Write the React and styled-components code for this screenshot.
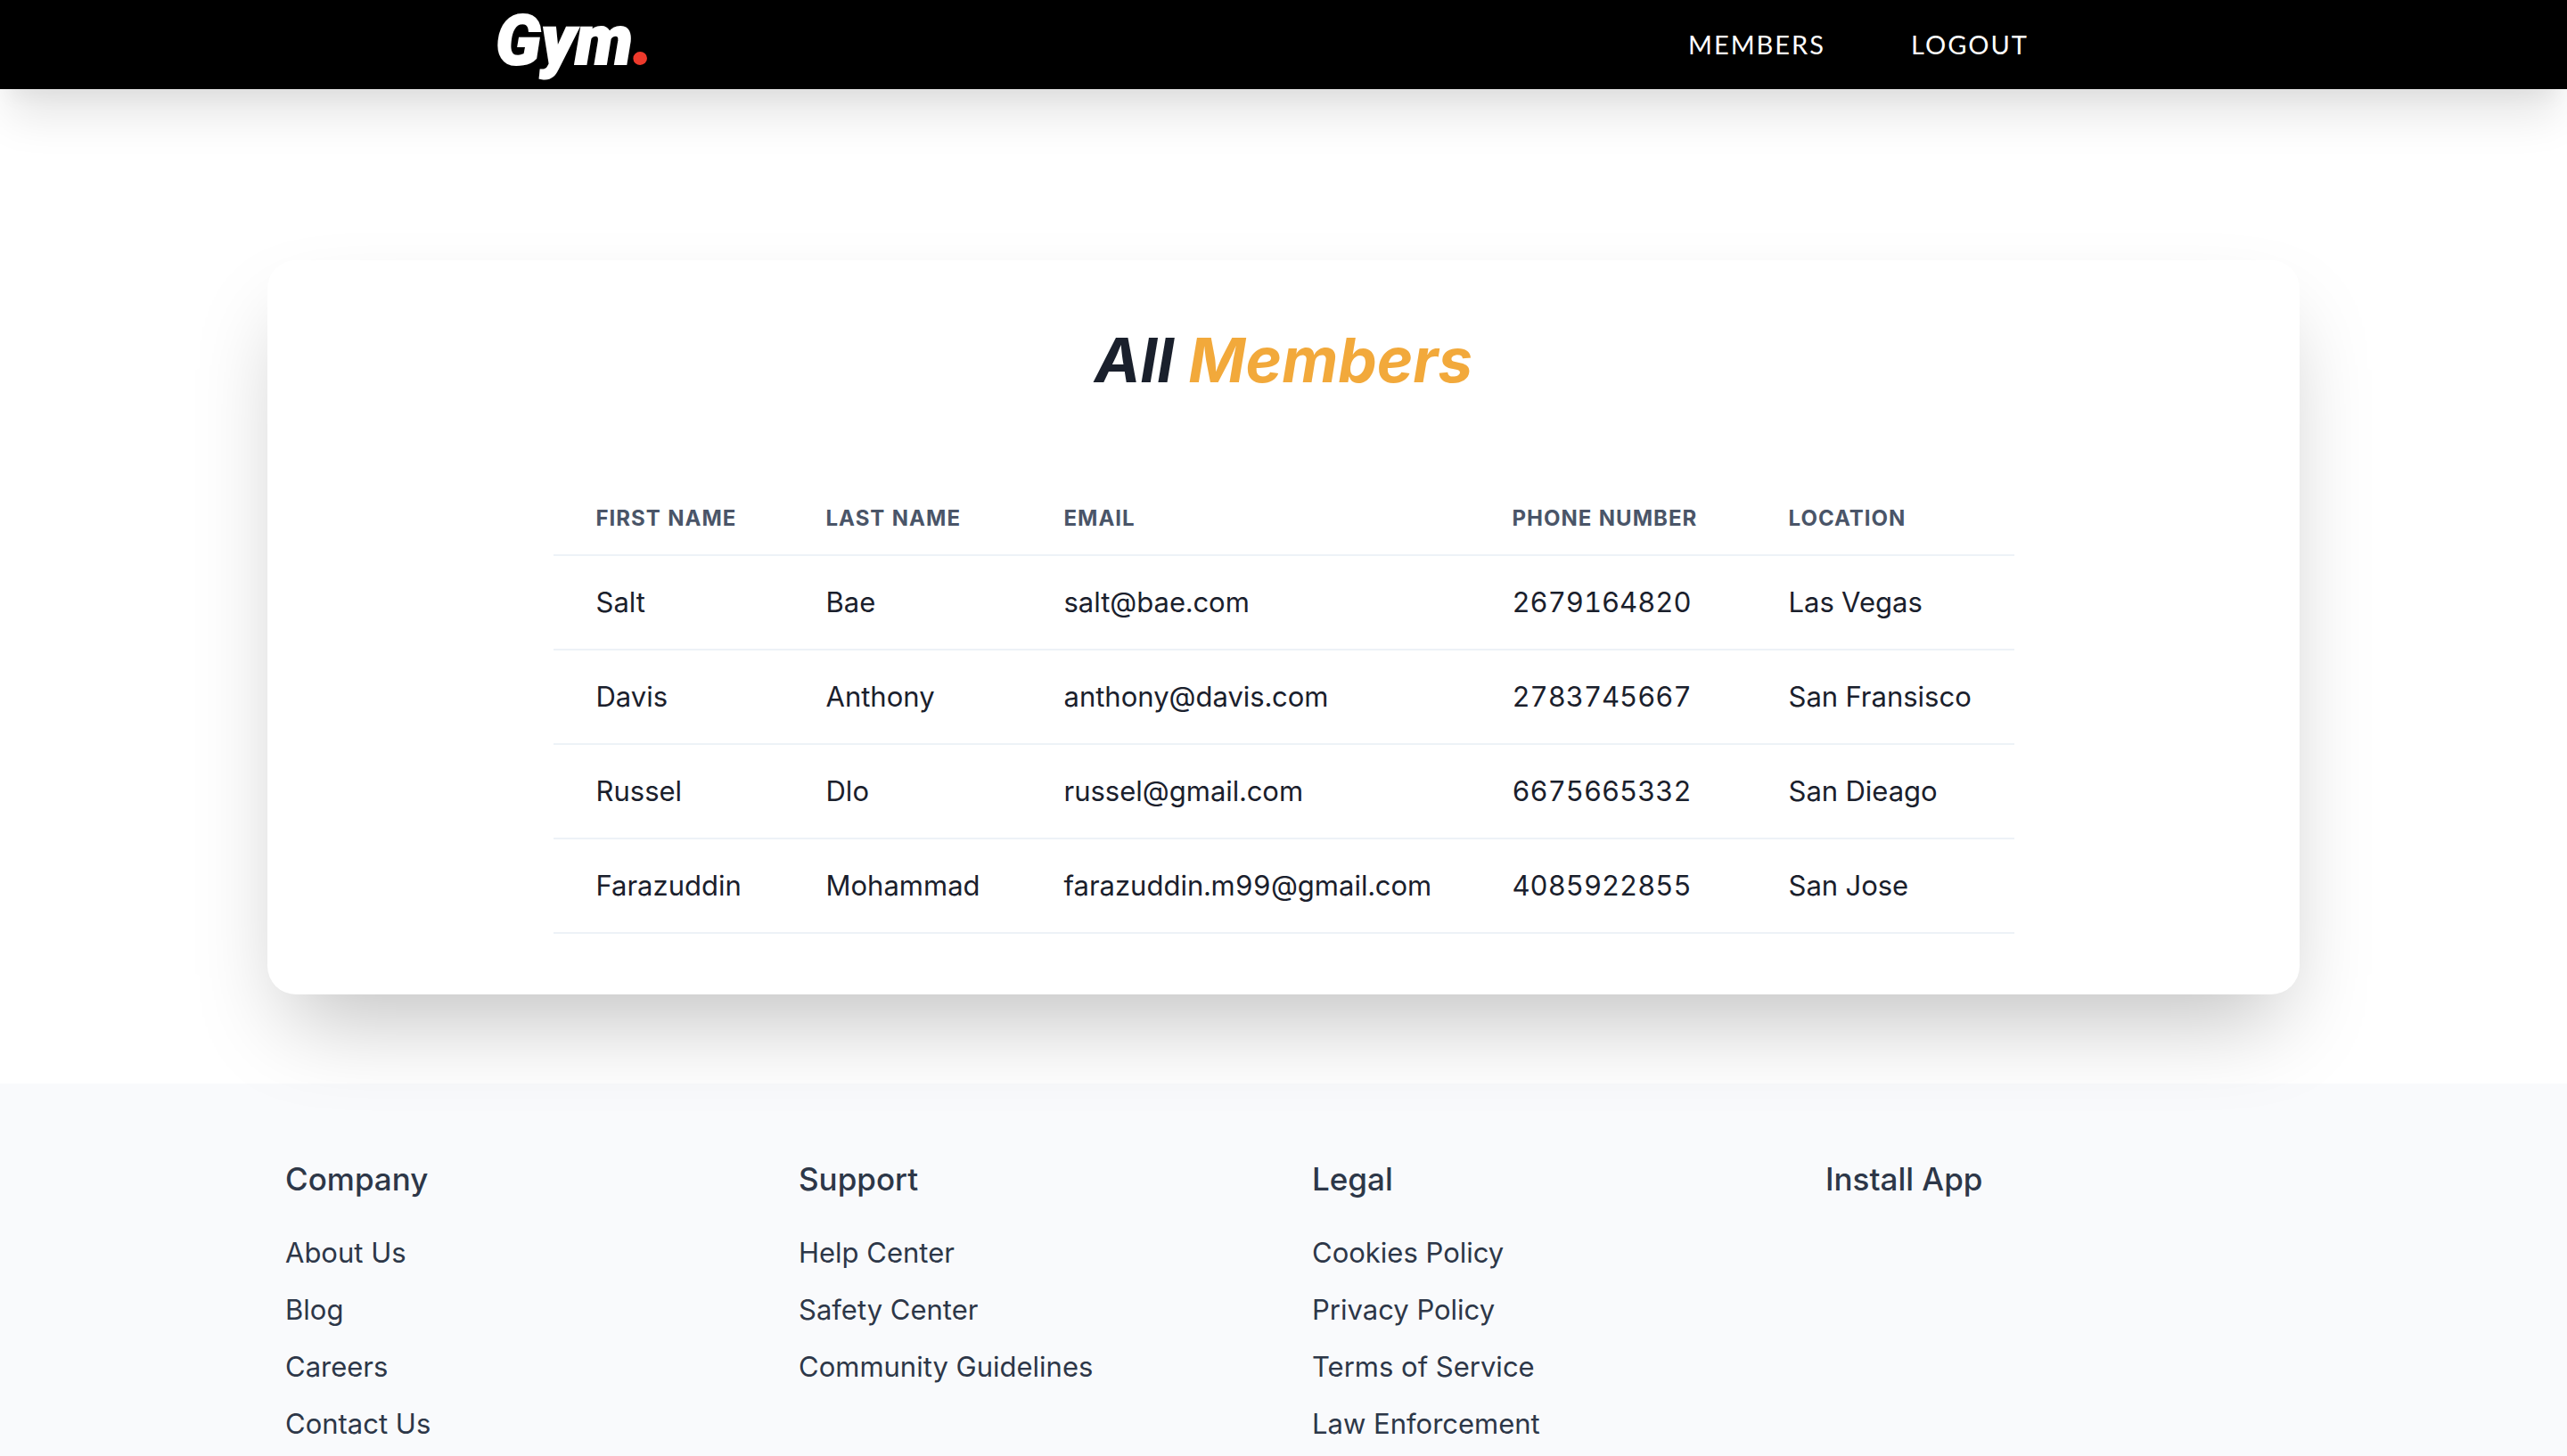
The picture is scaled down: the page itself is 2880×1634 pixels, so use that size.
import React from "react";
import styled, { createGlobalStyle } from "styled-components";

const GlobalStyle = createGlobalStyle`
  *, *::before, *::after { box-sizing: border-box; }
  body {
    margin: 0;
    background: #ffffff;
    color: #1a202c;
    font-family: Inter, "Liberation Sans", sans-serif;
    font-size: 31px;
    line-height: 48px;
  }
  a { color: inherit; text-decoration: none; }
`;

const NavBar = styled.header`
  display: flex;
  justify-content: space-around;
  align-items: center;
  height: 100px;
  background: #000000;
  box-shadow: 0 40px 50px -10px rgba(0, 0, 0, 0.1), 0 20px 20px -10px rgba(0, 0, 0, 0.04);
`;

const Logo = styled.a`
  width: 178px;
  padding-bottom: 8px;
  color: #ffffff;
  font: italic 900 77px/80px Roboto, sans-serif;
  -webkit-text-stroke: 2px currentColor;
  white-space: nowrap;
`;

const LogoDot = styled.span`
  color: #ee3a2c;
`;

const NavLinks = styled.nav`
  display: flex;
`;

const NavLink = styled.a`
  padding: 0 48px;
  color: #ffffff;
  font-family: Lato, sans-serif;
  font-size: 29px;
  letter-spacing: 2px;
  text-transform: uppercase;
`;

const Main = styled.main`
  padding: 192px 300px 100px;
`;

const Card = styled.section`
  position: relative;
  display: flex;
  flex-direction: column;
  align-items: center;
  padding: 68px 0;
  border-radius: 32px;
  background: #ffffff;
  box-shadow: 0 50px 100px -24px rgba(0, 0, 0, 0.25);
`;

const Title = styled.h1`
  margin: 0 0 94px;
  font-size: 69px;
  font-style: italic;
  font-weight: 700;
  line-height: 88px;
`;

const Accent = styled.span`
  color: #f2a93b;
`;

const Table = styled.table`
  table-layout: fixed;
  width: 1639px;
  border-collapse: collapse;
  text-align: left;
  font-variant-numeric: tabular-nums;
`;

const Col = styled.col`
  width: ${(p) => p.$width}px;
`;

const Th = styled.th`
  padding: 24px 48px;
  border-bottom: 2px solid #edf2f7;
  color: #4a5568;
  font-size: 24px;
  font-weight: 700;
  line-height: 32px;
  letter-spacing: 1px;
  text-transform: uppercase;
  white-space: nowrap;
`;

const Td = styled.td`
  padding: 32px 48px;
  border-bottom: 2px solid #edf2f7;
  line-height: 40px;
  white-space: nowrap;
`;

const Footer = styled.footer`
  background: #f9fafc;
  color: #2d3748;
`;

const FooterGrid = styled.div`
  display: grid;
  grid-template-columns: repeat(4, 1fr);
  gap: 64px;
  padding: 80px 320px;
`;

const FooterColumn = styled.div`
  display: flex;
  flex-direction: column;
  align-items: flex-start;
  gap: 16px;
`;

const FooterHeading = styled.h2`
  margin: 0 0 16px;
  font-size: 35px;
  font-weight: 500;
  line-height: 54px;
`;

const FooterLink = styled.a``;

const columns = [
  { label: "First Name", width: 258 },
  { label: "Last Name", width: 267 },
  { label: "Email", width: 503 },
  { label: "Phone Number", width: 310 },
  { label: "Location", width: 301 },
];

const members = [
  ["Salt", "Bae", "salt@bae.com", "2679164820", "Las Vegas"],
  ["Davis", "Anthony", "anthony@davis.com", "2783745667", "San Fransisco"],
  ["Russel", "Dlo", "russel@gmail.com", "6675665332", "San Dieago"],
  ["Farazuddin", "Mohammad", "farazuddin.m99@gmail.com", "4085922855", "San Jose"],
];

const footerColumns = [
  { title: "Company", links: ["About Us", "Blog", "Careers", "Contact Us"] },
  { title: "Support", links: ["Help Center", "Safety Center", "Community Guidelines"] },
  {
    title: "Legal",
    links: ["Cookies Policy", "Privacy Policy", "Terms of Service", "Law Enforcement"],
  },
  { title: "Install App", links: [] },
];

export default function App() {
  return (
    <>
      <GlobalStyle />
      <NavBar>
        <Logo href="#home">
          Gym<LogoDot>.</LogoDot>
        </Logo>
        <NavLinks>
          <NavLink href="#members">Members</NavLink>
          <NavLink href="#logout">Logout</NavLink>
        </NavLinks>
      </NavBar>
      <Main>
        <Card>
          <Title>
            All <Accent>Members</Accent>
          </Title>
          <Table>
            <colgroup>
              {columns.map((c) => (
                <Col key={c.label} $width={c.width} />
              ))}
            </colgroup>
            <thead>
              <tr>
                {columns.map((c) => (
                  <Th key={c.label} scope="col">
                    {c.label}
                  </Th>
                ))}
              </tr>
            </thead>
            <tbody>
              {members.map((row) => (
                <tr key={row[2]}>
                  {row.map((cell) => (
                    <Td key={cell}>{cell}</Td>
                  ))}
                </tr>
              ))}
            </tbody>
          </Table>
        </Card>
      </Main>
      <Footer>
        <FooterGrid>
          {footerColumns.map((c) => (
            <FooterColumn key={c.title}>
              <FooterHeading>{c.title}</FooterHeading>
              {c.links.map((link) => (
                <FooterLink key={link} href="#">
                  {link}
                </FooterLink>
              ))}
            </FooterColumn>
          ))}
        </FooterGrid>
      </Footer>
    </>
  );
}
